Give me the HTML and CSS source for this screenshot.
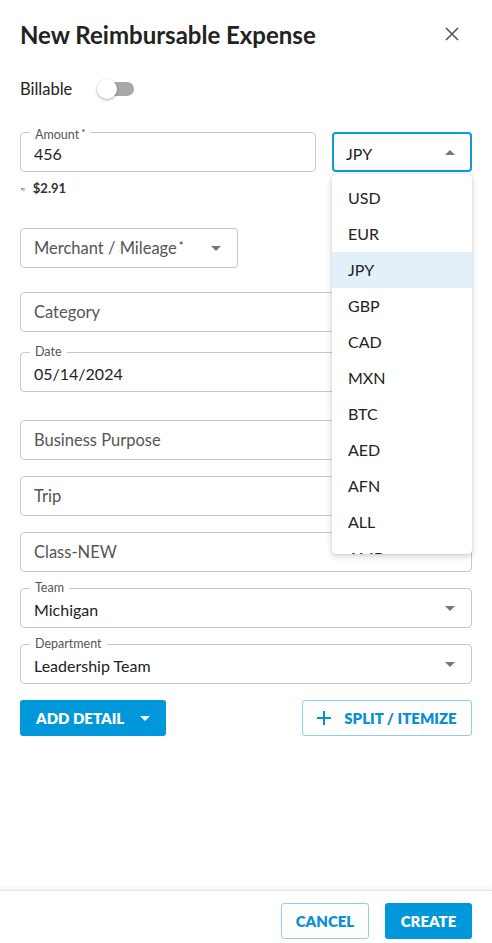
FILE: index.html
```html
<!DOCTYPE html>
<html lang="en">
<head>
    <meta charset="UTF-8">
    <title>New Reimbursable Expense</title>
    <link rel="stylesheet" href="styles.css">
</head>
<body>
<div id="dialog">
    <div class="dlg-head">
        <h1 class="dlg-title">New Reimbursable Expense</h1>
        <span class="dlg-close">
            <svg width="14" height="14" viewBox="0 0 14 14"><path d="M1 1L13 13M13 1L1 13" stroke="#555" stroke-width="1.6" fill="none"/></svg>
        </span>
    </div>

    <div class="dlg-body">
        <div class="billable">
            <span>Billable</span>
            <span class="switch"><span class="switch-thumb"></span></span>
        </div>

        <div class="amount-row">
            <div class="field field-amount">
                <label class="field-label">Amount<sup>*</sup></label>
                <span class="field-value">456</span>
            </div>
            <div class="field field-currency">
                <span class="field-value">JPY</span>
                <span class="arrow arrow-up"></span>
            </div>

            <!-- open currency list -->
            <ul class="menu">
                <li>USD</li>
                <li>EUR</li>
                <li class="selected">JPY</li>
                <li>GBP</li>
                <li>CAD</li>
                <li>MXN</li>
                <li>BTC</li>
                <li>AED</li>
                <li>AFN</li>
                <li>ALL</li>
                <li>AMD</li>
            </ul>
        </div>
        <div class="converted"><span class="approx">&asymp;</span><b>$2.91</b></div>

        <div class="field field-merchant">
            <span class="field-hint">Merchant / Mileage<sup>*</sup></span>
            <span class="arrow"></span>
        </div>

        <div class="field field-category">
            <span class="field-hint">Category</span>
        </div>

        <div class="field field-date">
            <label class="field-label">Date</label>
            <span class="field-value">05/14/2024</span>
        </div>

        <div class="field field-purpose">
            <span class="field-hint">Business Purpose</span>
        </div>

        <div class="field field-gap">
            <span class="field-hint">Trip</span>
        </div>

        <div class="field field-gap">
            <span class="field-hint">Class-NEW</span>
        </div>

        <div class="field field-gap">
            <label class="field-label">Team</label>
            <span class="field-value">Michigan</span>
            <span class="arrow"></span>
        </div>

        <div class="field field-gap">
            <label class="field-label">Department</label>
            <span class="field-value">Leadership Team</span>
            <span class="arrow"></span>
        </div>

        <div class="actions">
            <button class="btn btn-blue btn-detail">ADD DETAIL <span class="arrow arrow-white"></span></button>
            <button class="btn btn-line btn-split">
                <svg width="14" height="14" viewBox="0 0 14 14"><path d="M7 0V14M0 7H14" stroke="#0a8fd4" stroke-width="2"/></svg>
                SPLIT / ITEMIZE
            </button>
        </div>
    </div>

    <div class="dlg-foot">
        <button class="btn btn-line btn-cancel">CANCEL</button>
        <button class="btn btn-blue btn-create">CREATE</button>
    </div>
</div>
</body>
</html>
```

FILE: styles.css
```css
* {
    margin: 0;
    padding: 0;
    box-sizing: border-box;
}

body {
    font-family: Lato, "Open Sans", "Liberation Sans", sans-serif;
    color: #222;
    background: #fff;
}

#dialog {
    width: 492px;
    height: 943px;
    display: flex;
    flex-direction: column;
}

.dlg-head {
    display: flex;
    align-items: center;
    justify-content: space-between;
    padding: 20px 33px 0 20px;
    height: 50px;
}

.dlg-title {
    font-size: 24px;
    font-weight: 700;
    color: #222;
    line-height: 30px;
}

.dlg-close {
    display: flex;
    margin-top: -2px;
}

.dlg-body {
    flex: 1;
    padding: 0 20px;
    display: flex;
    flex-direction: column;
}

.billable {
    display: flex;
    align-items: center;
    font-size: 16.5px;
    color: #222;
    margin-top: 28px;
    height: 22px;
}

.switch {
    position: relative;
    width: 34px;
    height: 14px;
    margin-left: 28px;
    border-radius: 7px;
    background: #a8a8a8;
}

.switch-thumb {
    position: absolute;
    left: -3px;
    top: -3px;
    width: 20px;
    height: 20px;
    border-radius: 50%;
    background: #fff;
    box-shadow: 0 1px 3px rgba(0, 0, 0, 0.35);
}

/* outlined text fields */
.field {
    position: relative;
    height: 40px;
    border: 1px solid #c8c8c8;
    border-radius: 4px;
    display: flex;
    align-items: center;
    padding: 0 13px;
    font-size: 16px;
    flex-shrink: 0;
}

.field-label {
    position: absolute;
    left: 9px;
    top: -8px;
    padding: 0 5px;
    background: #fff;
    font-size: 12.5px;
    color: #555;
    line-height: 14px;
}

.field-label sup {
    font-size: 10px;
    vertical-align: 3px;
}

.field-value {
    flex: 1;
    color: #222;
    padding-top: 2px;
}

.field-hint {
    flex: 1;
    color: #555;
    font-size: 16.5px;
}

sup {
    font-size: 11px;
    vertical-align: 4px;
    margin-left: 2px;
    color: #333;
}

.arrow {
    width: 0;
    height: 0;
    border-left: 5px solid transparent;
    border-right: 5px solid transparent;
    border-top: 5px solid #777;
    margin-right: 3px;
}

.arrow-up {
    border-top: 0;
    border-bottom: 5px solid #777;
}

.arrow-white {
    border-top-color: #fff;
    margin-left: 16px;
    margin-right: 0;
}

.amount-row {
    position: relative;
    display: flex;
    margin-top: 32px;
}

.field-amount {
    width: 296px;
}

.field-currency {
    width: 140px;
    margin-left: 16px;
    border: 2px solid #0f9ad8;
    padding: 0 12px;
}

.converted {
    font-size: 13px;
    color: #333;
    margin-top: 9px;
    line-height: 14px;
}

.approx {
    font-size: 10px;
    color: #777;
    margin-right: 7px;
}

.menu {
    position: absolute;
    left: 312px;
    top: 42px;
    width: 140px;
    height: 380px;
    overflow: hidden;
    list-style: none;
    background: #fff;
    border-radius: 4px;
    padding-top: 6px;
    box-shadow: 0 2px 6px rgba(0, 0, 0, 0.2), 0 0 1px rgba(0, 0, 0, 0.25);
    z-index: 2;
}

.menu li {
    height: 36px;
    line-height: 36px;
    padding-left: 16px;
    font-size: 16px;
    color: #222;
}

.menu li.selected {
    background: #e3f0fa;
}

.field-merchant {
    width: 218px;
    margin-top: 32px;
}

.field-category {
    margin-top: 24px;
}

.field-date {
    margin-top: 20px;
}

.field-purpose {
    margin-top: 28px;
}

.field-gap {
    margin-top: 16px;
}

/* buttons */
.btn {
    font-family: inherit;
    font-size: 15px;
    font-weight: 800;
    height: 36px;
    border-radius: 3px;
    display: flex;
    align-items: center;
    justify-content: center;
    cursor: pointer;
}

.btn-blue {
    background: #0098db;
    color: #fff;
    border: none;
}

.btn-line {
    background: #fff;
    color: #0a8fd4;
    border: 1px solid #8fd0ef;
}

.actions {
    display: flex;
    justify-content: space-between;
    margin-top: 16px;
}

.btn-detail {
    width: 146px;
    justify-content: flex-start;
    padding-left: 16px;
}

.btn-split {
    width: 170px;
}

.btn-split svg {
    margin-right: 13px;
}

.dlg-foot {
    height: 53px;
    display: flex;
    justify-content: flex-end;
    align-items: flex-start;
    padding: 12px 20px 0 0;
    border-top: 1px solid #e4e4e4;
    box-shadow: 0 -2px 4px rgba(0, 0, 0, 0.06);
}

.btn-cancel {
    width: 88px;
}

.btn-create {
    width: 87px;
    margin-left: 16px;
}
```
